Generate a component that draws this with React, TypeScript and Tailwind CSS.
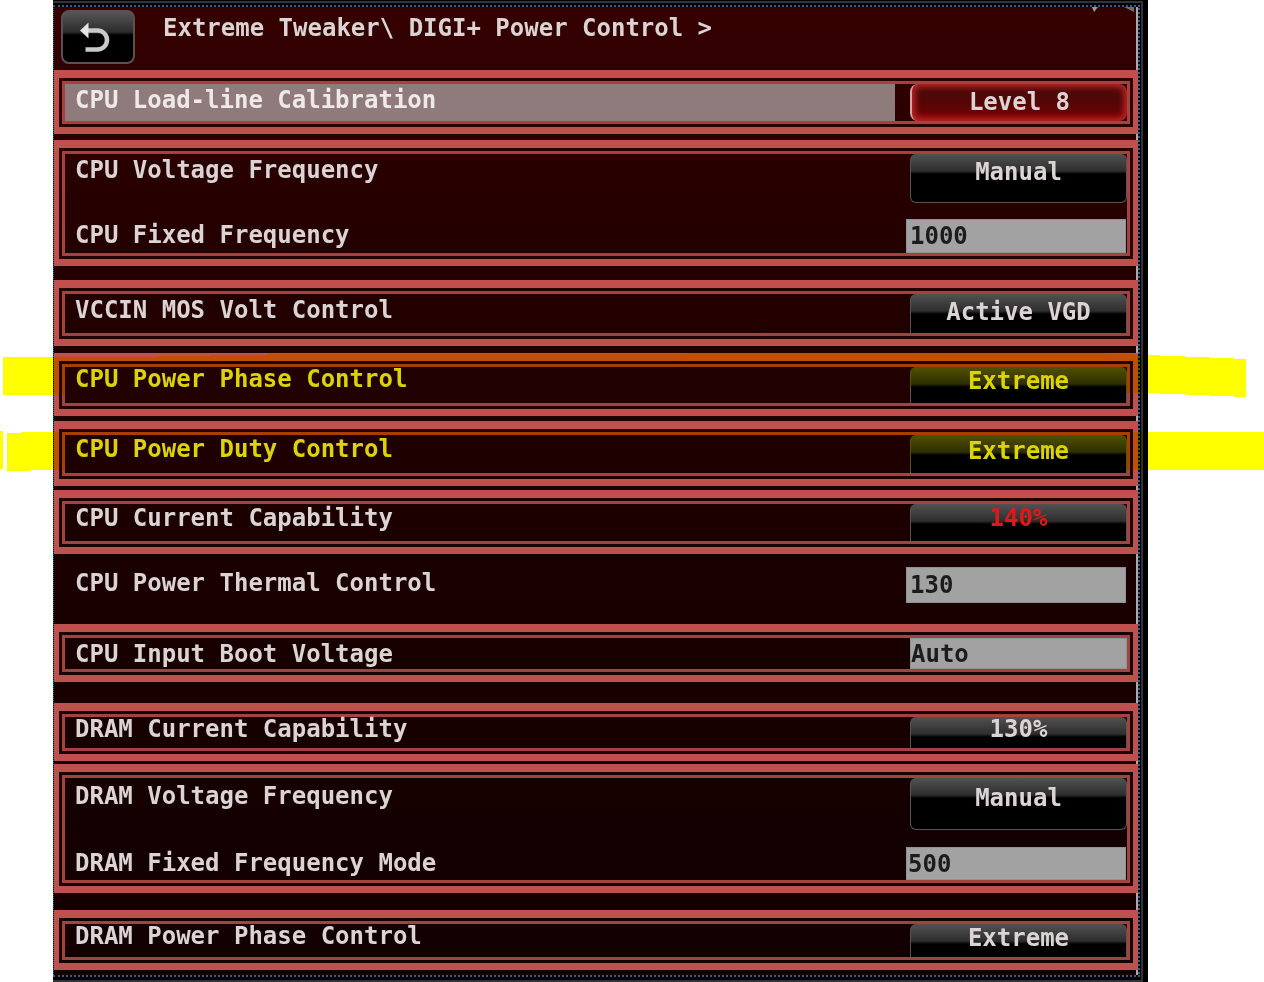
import React, { useState } from "react";

type RowProps = {
    id: string;
    label: string;
    className?: string;
    labelClass?: string;
    children: React.ReactNode;
};

const Row: React.FC<RowProps> = ({ id, label, className = "", labelClass = "", children }) => (
    <div className={`flex items-start justify-between ${className}`}>
        <label htmlFor={id} className={`flex-1 pl-[10px] whitespace-nowrap ${labelClass}`}>
            {label}
        </label>
        {children}
    </div>
);

// double red outline around one or more settings
const Frame: React.FC<{ className?: string; children: React.ReactNode }> = ({ className = "", children }) => (
    <section className={`border-x-[5px] border-t-8 border-b-[7px] border-[#c0504d] p-[3px] ${className}`}>
        <div className="border-[3px] border-[#a34240]">{children}</div>
    </section>
);

type OptionProps = { id: string; className?: string; children: React.ReactNode };

const Option: React.FC<OptionProps> = ({ id, className = "", children }) => (
    <button
        id={id}
        type="button"
        className={`w-[217px] shrink-0 flex items-start justify-center border-x border-[#555] rounded-t-md bg-[linear-gradient(to_bottom,#525252,#2e2e2e_17px,#000_20px)] ${className}`}
    >
        {children}
    </button>
);

type FieldProps = { id: string; initial: string; className?: string };

const Field: React.FC<FieldProps> = ({ id, initial, className = "" }) => {
    const [value, setValue] = useState(initial);

    return (
        <input
            id={id}
            type="text"
            value={value}
            onChange={(e) => setValue(e.target.value)}
            className={`shrink-0 border border-[#8b9496] bg-[#a2a2a2] text-[#1c1c1c] outline-none ${className}`}
        />
    );
};

const Header: React.FC = () => (
    <header className="relative flex items-start h-[63px] pt-[3px] pl-[7px]">
        <button
            type="button"
            aria-label="Back"
            className="w-[74px] h-[54px] flex items-center justify-center rounded-lg border-2 border-[#5c5151] bg-[linear-gradient(to_bottom,#555,#2c2c2c_20px,#000_23px)]"
        >
            <svg viewBox="0 0 36 32" className="w-9 h-8">
                <path d="M7 9.5H17.5a9.5 9.5 0 0 1 0 19H5.5" fill="none" stroke="#c9c9c9" strokeWidth="4.5" />
                <path d="M0 9.5L8.5 1.5V17.5Z" fill="#e4e4e4" />
            </svg>
        </button>
        <h1 className="pl-7 pt-[6px] whitespace-nowrap">Extreme Tweaker\ DIGI+ Power Control &gt;</h1>
        <svg viewBox="0 0 50 8" className="absolute top-0 right-0 w-[50px] h-2">
            <path d="M4 0H10L6 5Z" fill="#9a9a9a" />
            <path d="M36 0H46V5Z" fill="#6f6f6f" />
        </svg>
    </header>
);

// marker strokes drawn over the page
const Highlights: React.FC = () => (
    <svg
        viewBox="0 0 1264 120"
        preserveAspectRatio="none"
        className="absolute left-0 top-[352px] w-full h-[120px] mix-blend-multiply pointer-events-none"
        fill="#ffff00"
        shapeRendering="crispEdges"
    >
        <path d="M3 5H128L295 2L1090 1L1148 3L1246 7V45L1148 41L1000 38L910 35L600 39L66 43H3Z" />
        <path d="M0 79H3V117H0Z" />
        <path d="M7 81H21V80H1264V118H31V119H7Z" />
    </svg>
);

const App: React.FC = () => {
    return (
        <div className="relative bg-white pl-[53px] pr-[116px] font-['DejaVu_Sans_Mono','Liberation_Mono',monospace] text-2xl leading-6 font-bold text-[#dcd4d4]">
            <div className="bg-black pt-px pr-[5px]">
                <div className="border-y-2 border-r-2 border-[#333] pt-0.5 pr-px pb-[3px]">
                    <div className="border-2 border-l border-dotted border-[#2f5f8f]">
                        <main className="pb-[5px] bg-[linear-gradient(to_left,#b0a8a8_2px,transparent_2px),linear-gradient(to_bottom,#350000,#260000_20%,#1a0000_60%,#120000)]">
                            <Header />

                            <Frame>
                                <Row id="llc" label="CPU Load-line Calibration" className="h-[37px]" labelClass="mr-[15px] h-full pt-1 bg-[#8f7b7b] text-[#efe9e9]">
                                    <button
                                        id="llc"
                                        type="button"
                                        className="w-[217px] h-full shrink-0 flex items-start justify-center rounded-lg border-l-2 border-[#e0a0a0] pt-1.5 bg-[linear-gradient(to_bottom,#480a0a,#540606_50%,#7c0000)] shadow-[inset_0_0_6px_3px_#c02626]"
                                    >
                                        Level 8
                                    </button>
                                </Row>
                            </Frame>

                            <Frame className="mt-1.5">
                                <Row id="cpu-volt-freq" label="CPU Voltage Frequency" className="h-[65px]" labelClass="pt-1">
                                    <Option id="cpu-volt-freq" className="h-[49px] pt-1.5 rounded-b-md border-b">Manual</Option>
                                </Row>
                                <Row id="cpu-fixed-freq" label="CPU Fixed Frequency" className="h-[34px]" labelClass="pt-1">
                                    <Field id="cpu-fixed-freq" initial="1000" className="w-[220px] h-[34px] mr-px pl-[3px]" />
                                </Row>
                            </Frame>

                            <Frame className="mt-[14px]">
                                <Row id="vccin" label="VCCIN MOS Volt Control" className="h-[39px]" labelClass="pt-1">
                                    <Option id="vccin" className="h-full pt-1.5">Active VGD</Option>
                                </Row>
                            </Frame>

                            <Frame className="mt-[7px]">
                                <Row id="cpu-phase" label="CPU Power Phase Control" className="h-9">
                                    <Option id="cpu-phase" className="h-full pt-0.5">Extreme</Option>
                                </Row>
                            </Frame>

                            <Frame className="mt-[5px]">
                                <Row id="cpu-duty" label="CPU Power Duty Control" className="h-[38px]" labelClass="pt-0.5">
                                    <Option id="cpu-duty" className="h-full pt-1">Extreme</Option>
                                </Row>
                            </Frame>

                            <Frame className="mt-1">
                                <Row id="cpu-current" label="CPU Current Capability" className="h-[37px]" labelClass="pt-0.5">
                                    <Option id="cpu-current" className="h-full pt-0.5 text-[#e01818]">140%</Option>
                                </Row>
                            </Frame>

                            <Row id="cpu-thermal" label="CPU Power Thermal Control" className="h-[70px] pt-[13px] pl-[11px] pr-3" labelClass="pt-1">
                                <Field id="cpu-thermal" initial="130" className="w-[220px] h-9 pl-[3px]" />
                            </Row>

                            <Frame>
                                <Row id="boot-volt" label="CPU Input Boot Voltage" className="h-[31px]" labelClass="pt-1">
                                    <Field id="boot-volt" initial="Auto" className="w-[217px] h-full" />
                                </Row>
                            </Frame>

                            <Frame className="mt-[21px]">
                                <Row id="dram-current" label="DRAM Current Capability" className="h-[31px]">
                                    <Option id="dram-current" className="h-full">130%</Option>
                                </Row>
                            </Frame>

                            <Frame className="mt-[3px]">
                                <Row id="dram-volt-freq" label="DRAM Voltage Frequency" className="h-[69px]" labelClass="pt-1.5">
                                    <Option id="dram-volt-freq" className="h-[52px] pt-2 rounded-b-md border-b">Manual</Option>
                                </Row>
                                <Row id="dram-fixed-freq" label="DRAM Fixed Frequency Mode" className="h-[33px]" labelClass="pt-1">
                                    <Field id="dram-fixed-freq" initial="500" className="w-[220px] h-[33px] mr-px pl-px" />
                                </Row>
                            </Frame>

                            <Frame className="mt-[17px]">
                                <Row id="dram-phase" label="DRAM Power Phase Control" className="h-[33px]">
                                    <Option id="dram-phase" className="h-full pt-0.5">Extreme</Option>
                                </Row>
                            </Frame>
                        </main>
                    </div>
                </div>
            </div>
            <Highlights />
        </div>
    );
};

export default App;
